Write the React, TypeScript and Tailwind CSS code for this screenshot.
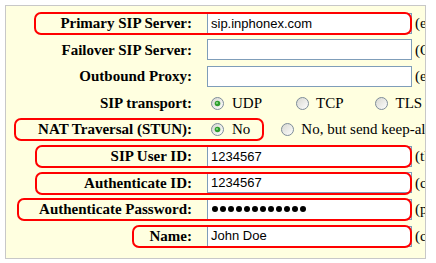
import React from 'react';

type Box = { left: number; width: number };

const serif = { fontFamily: '"Liberation Serif", "Times New Roman", serif' };

const Radio = ({ checked }: { checked?: boolean }) => (
  <svg width="13" height="13" viewBox="0 0 13 13" className="shrink-0">
    <defs>
      <linearGradient id="rg" x1="0" y1="0" x2="1" y2="1">
        <stop offset="0" stopColor="#d6d6cf" />
        <stop offset="1" stopColor="#ffffff" />
      </linearGradient>
    </defs>
    <circle cx="6.5" cy="6.5" r="6" fill="url(#rg)" stroke="#7d8c98" strokeWidth="1" />
    {checked && (
      <>
        <circle cx="6.5" cy="6.5" r="2.8" fill="#2f9e2f" />
        <circle cx="6" cy="6" r="1.1" fill="#8fdc8f" />
      </>
    )}
  </svg>
);

const Highlight = ({ box }: { box: Box }) => (
  <div
    className="absolute top-[2px] h-[23px] rounded-[7px] border-2 border-[#ff0000] pointer-events-none"
    style={{ left: box.left, width: box.width }}
  />
);

const Row = ({ label, box, children }: { label: string; box?: Box; children: React.ReactNode }) => (
  <div className="relative flex items-center h-[26.6px]">
    <div className="w-[186px] shrink-0 text-right font-bold text-[15px] text-black whitespace-nowrap" style={serif}>
      {label}
    </div>
    <div className="ml-[15px] flex items-center whitespace-nowrap">{children}</div>
    {box && <Highlight box={box} />}
  </div>
);

const Field = ({ value, hint, password }: { value?: string; hint: string; password?: boolean }) => (
  <>
    <div className="w-[205px] h-[21px] border border-[#7f9db9] bg-white flex items-center pl-[3px] text-[13px] text-black" style={{ fontFamily: '"Liberation Sans", Arial, sans-serif' }}>
      {password ? (
        <div className="flex gap-[2px] pl-[1px]">
          {Array.from({ length: 12 }).map((_, i) => (
            <div key={i} className="w-[6px] h-[6px] rounded-full bg-black" />
          ))}
        </div>
      ) : (
        value
      )}
    </div>
    <span className="ml-[3px] text-[15px] text-black" style={serif}>{hint}</span>
  </>
);

export default function App() {
  return (
    <div className="w-[436px] h-[263px] bg-white p-[5px]">
      <div className="w-[421px] h-[254px] border border-[#c8c8c8] bg-[#ffffe0] overflow-hidden pt-[4px]">
        <Row label="Primary SIP Server:" box={{ left: 28, width: 378 }}>
          <Field value="sip.inphonex.com" hint="(e.g. sip.inphonex.com)" />
        </Row>
        <Row label="Failover SIP Server:">
          <Field hint="(Optional)" />
        </Row>
        <Row label="Outbound Proxy:">
          <Field hint=" (e.g. proxy.inphonex.com)" />
        </Row>
        <Row label="SIP transport:">
          <div className="flex items-center text-[15px] text-black" style={serif}>
            <div className="ml-[4px]"><Radio checked /></div>
            <span className="ml-[8px]">UDP</span>
            <div className="ml-[34px]"><Radio /></div>
            <span className="ml-[7px]">TCP</span>
            <div className="ml-[31px]"><Radio /></div>
            <span className="ml-[8px]">TLS</span>
          </div>
        </Row>
        <Row label="NAT Traversal (STUN):" box={{ left: 8, width: 250 }}>
          <div className="flex items-center text-[15px] text-black" style={serif}>
            <div className="ml-[4px]"><Radio checked /></div>
            <span className="ml-[8px]">No</span>
            <div className="ml-[31px]"><Radio /></div>
            <span className="ml-[7px]">No, but send keep-alive</span>
          </div>
        </Row>
        <Row label="SIP User ID:" box={{ left: 29, width: 377 }}>
          <Field value="1234567" hint="(the SIP User ID)" />
        </Row>
        <Row label="Authenticate ID:" box={{ left: 29, width: 377 }}>
          <Field value="1234567" hint="(c" />
        </Row>
        <Row label="Authenticate Password:" box={{ left: 11, width: 395 }}>
          <Field password hint="(password)" />
        </Row>
        <Row label="Name:" box={{ left: 126, width: 280 }}>
          <Field value="John Doe" hint="(caller ID name)" />
        </Row>
      </div>
    </div>
  );
}
